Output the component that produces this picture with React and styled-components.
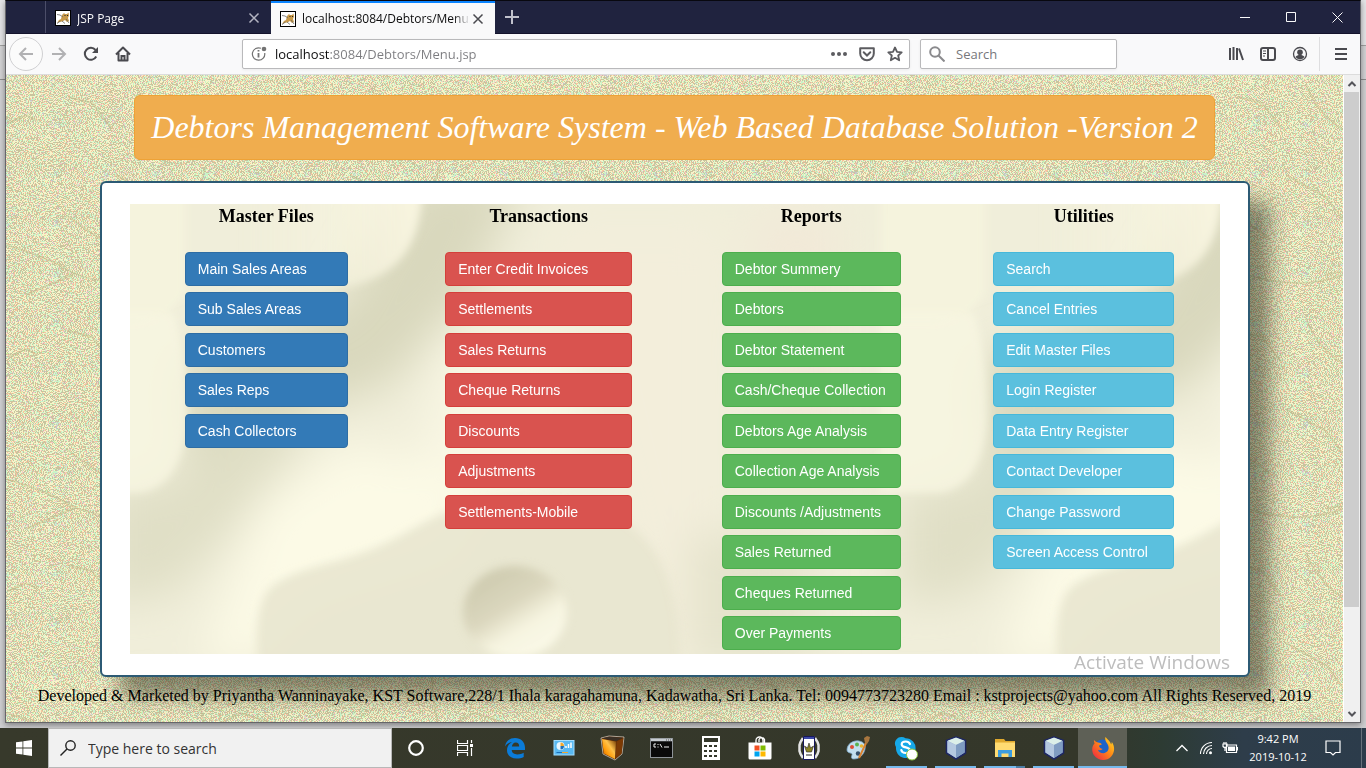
import React from "react";
import styled, { createGlobalStyle } from "styled-components";

const UI_FONT = '"Open Sans", "Noto Sans", sans-serif';

const GlobalStyle = createGlobalStyle`
  *, *::before, *::after { box-sizing: border-box; }
  body { margin: 0; background: #c4c4c4; font-family: ${UI_FONT}; }
  button { font: inherit; color: inherit; background: none; border: 0; padding: 0; }
  h1, h2, p, ul { margin: 0; padding: 0; }
  ul { list-style: none; }
`;

/* ---------- desktop ---------- */

const Desktop = styled.div`
  display: flex;
  flex-direction: column;
  min-height: 100vh;
  background: linear-gradient(#e4e4e6 0 45px, #a0a0a0 45px 46px, #d2d2d4 46px 79px, #8c8c8c 79px 80px, #cfcfd1 80px);
`;

const BrowserWindow = styled.div`
  flex: 1;
  display: flex;
  flex-direction: column;
  margin: 0 5px 5px;
  border: 1px solid #66666a;
  border-top-color: #08080f;
  box-shadow: 0 2px 6px rgba(0, 0, 0, 0.4);
  background: #f9f9fa;
`;

/* ---------- tab strip ---------- */

const TabStrip = styled.header`
  display: flex;
  align-items: stretch;
  height: 33px;
  padding-left: 39px;
  background: #20233f;
  border-bottom: 1px solid #14132c;
  color: #f9f9fa;
`;

const Tab = styled.div`
  display: flex;
  align-items: center;
  width: ${(p) => (p.$active ? 224 : 226)}px;
  height: ${(p) => (p.$active ? 33 : 32)}px;
  padding: ${(p) => (p.$active ? 0 : 2)}px 9px 0 9px;
  border-top: ${(p) => (p.$active ? "2px solid #0a84ff" : "0")};
  border-left: ${(p) => (p.$active ? "0" : "1px solid #4c4e69")};
  background: ${(p) => (p.$active ? "#f9f9fa" : "transparent")};
  color: ${(p) => (p.$active ? "#0c0c0d" : "#f9f9fa")};
  font-size: 12px;
  svg { flex: none; }
`;

const TabTitle = styled.span`
  flex: 1;
  overflow: hidden;
  margin: 0 0 0 6px;
  white-space: nowrap;
  mask-image: linear-gradient(90deg, #000 calc(100% - 16px), transparent);
`;

const TabClose = styled.button`
  display: flex;
  padding: 2px;
  color: ${(p) => (p.$active ? "#4a4a4f" : "#b4b5c2")};
`;

const NewTab = styled.button`
  display: flex;
  align-items: center;
  padding: 0 10px;
  color: #c0c1cc;
`;

const WindowButtons = styled.div`
  display: flex;
  margin-left: auto;
  button { display: flex; align-items: center; justify-content: center; width: 46px; }
`;

/* ---------- toolbar ---------- */

const Toolbar = styled.div`
  display: flex;
  align-items: center;
  height: 41px;
  padding: 0 3px;
  border-bottom: 1px solid #dcdcdc;
  color: #4a4a4f;
`;

const ToolButton = styled.button`
  display: flex;
  align-items: center;
  justify-content: center;
  width: 32px;
  height: 32px;
`;

const BackButton = styled(ToolButton)`
  width: 34px;
  height: 34px;
  border: 1px solid #d0d0d2;
  border-radius: 50%;
  background: #fbfbfb;
`;

const Field = styled.form`
  display: flex;
  align-items: center;
  height: 30px;
  border: 1px solid #b9b9bb;
  border-radius: 2px;
  background: #fff;
  box-shadow: 0 1px 3px rgba(0, 0, 0, 0.06);
  input {
    flex: 1;
    min-width: 0;
    padding: 0;
    border: 0;
    outline: 0;
    background: transparent;
    font: 13px ${UI_FONT};
  }
`;

const AddressField = styled(Field)`
  flex: 1;
  margin-left: 103px;
  padding: 0 6px 0 8px;
  gap: 8px;
  input {
    color: transparent;
    background: linear-gradient(90deg, #0c0c0d 54px, #7c7c80 54px);
    background-clip: text;
    -webkit-background-clip: text;
  }
`;

const FieldActions = styled.div`
  display: flex;
  gap: 12px;
  color: #5c5c60;
  button { display: flex; }
`;

const SearchField = styled(Field)`
  width: 197px;
  margin: 0 103px 0 10px;
  padding: 0 8px;
  gap: 11px;
  input::placeholder { color: #77777b; opacity: 1; }
`;

const MenuDivider = styled.span`
  width: 1px;
  height: 34px;
  margin: 0 5px 0 3px;
  background: #dedee0;
`;

/* ---------- web page ---------- */

const Viewport = styled.div`
  flex: 1;
  display: flex;
`;

const Page = styled.main`
  position: relative;
  isolation: isolate;
  overflow: hidden;
  flex: 1;
  display: flex;
  flex-direction: column;
  align-items: center;
  padding-top: 20px;
  background: #ddd6b4;
  font-family: "Liberation Serif", "Times New Roman", serif;
`;

const Backdrop = styled.svg`
  position: absolute;
  inset: 0;
  z-index: -1;
  width: 100%;
  height: 100%;
`;

const Banner = styled.h1`
  padding: 12px 16px;
  border: 1px solid #eea236;
  border-radius: 6px;
  background: #f0ad4e;
  color: #fff;
  font-size: 32px;
  font-style: italic;
  font-weight: 400;
  line-height: 39px;
  white-space: nowrap;
`;

const Card = styled.section`
  align-self: stretch;
  margin: 21px 93px 0 94px;
  padding: 21px 28px;
  border: 2px solid #2c5a74;
  border-radius: 6px;
  background: #fff;
  box-shadow: 20px 20px 20px rgba(40, 40, 24, 0.5);
`;

const Panel = styled.div`
  position: relative;
  isolation: isolate;
  overflow: hidden;
  display: grid;
  grid-template-columns: repeat(4, 1fr);
  padding-bottom: 4px;
  background: #f0eeda;
`;

const MenuColumn = styled.section`
  display: flex;
  flex-direction: column;
  align-items: center;
`;

const MenuHeading = styled.h2`
  height: 48px;
  padding-top: 2px;
  font-size: 18px;
  line-height: 20px;
  color: #000;
`;

const MenuList = styled.ul`
  display: grid;
  grid-template-rows: repeat(10, 34px);
  align-content: space-between;
  width: ${(p) => p.$width}px;
  height: 398px;
`;

const MenuButton = styled.button`
  width: 100%;
  height: 34px;
  padding: 0 12px;
  border: 1px solid ${(p) => p.$edge};
  border-radius: 4px;
  background: ${(p) => p.$fill};
  color: #fff;
  font: 14px/20px "Liberation Sans", Arial, sans-serif;
  text-align: left;
  white-space: nowrap;
`;

const PageFooter = styled.footer`
  padding: 10px 0;
  font-size: 16px;
  line-height: 18px;
  color: #000;
  white-space: nowrap;
`;

const Watermark = styled.div`
  position: absolute;
  right: 113px;
  bottom: 47px;
  color: #bdbdbd;
  font: 19px/26px ${UI_FONT};
  white-space: nowrap;
  pointer-events: none;
`;

const ScrollBar = styled.div`
  display: flex;
  flex-direction: column;
  width: 17px;
  border-left: 1px solid #fff;
  background: #f0f0f0;
  color: #55555a;
  button { display: flex; align-items: center; justify-content: center; height: 17px; }
`;

const ScrollTrack = styled.div`
  flex: 1;
  &::before { content: ""; display: block; height: 84%; margin-right: 1px; background: #cdcdcd; }
`;

/* ---------- taskbar ---------- */

const Taskbar = styled.footer`
  display: flex;
  height: 40px;
  background: linear-gradient(90deg, #37392b 0, #34372a 80%, #2d3b33 85%, #2e3d4a 91%, #2c3c4b 100%);
  color: #fff;
`;

const StartButton = styled.button`
  display: flex;
  align-items: center;
  justify-content: center;
  width: 48px;
`;

const TaskSearch = styled.form`
  display: flex;
  align-items: center;
  gap: 12px;
  width: 344px;
  padding-left: 11px;
  border: 1px solid #b8b8b8;
  background: #f1f1f1;
  color: #222;
  input {
    flex: 1;
    min-width: 0;
    padding: 0;
    border: 0;
    outline: 0;
    background: transparent;
    font: 14px ${UI_FONT};
  }
  input::placeholder { color: #333; opacity: 1; }
`;

const TaskButton = styled.button`
  position: relative;
  display: flex;
  align-items: center;
  justify-content: center;
  width: 49px;
  background: ${(p) => (p.$focused ? "#5e6056" : "transparent")};
  &::after {
    content: "";
    position: absolute;
    bottom: 0;
    left: ${(p) => (p.$focused ? 0 : 4)}px;
    right: ${(p) => (p.$focused ? 0 : 4)}px;
    height: ${(p) => (p.$running ? 2 : 0)}px;
    background: ${(p) => (p.$stacked ? "linear-gradient(90deg, #76b9ed 78%, #4d7ea5 78%)" : "#76b9ed")};
  }
`;

const Tray = styled.div`
  display: flex;
  align-items: center;
  margin-left: auto;
  padding-right: 16px;
  border-right: 1px solid #66717b;
  margin-right: 4px;
  button { display: flex; align-items: center; justify-content: center; width: 24px; height: 40px; }
`;

const Clock = styled.time`
  width: 68px;
  margin: 0 9px 0 2px;
  font-size: 11px;
  line-height: 18px;
  text-align: center;
  white-space: nowrap;
`;

/* ---------- drawings ---------- */

const Glyph = ({ size = 16, sw = 2, children, ...rest }) => (
  <svg width={size} height={size} viewBox={`0 0 ${size} ${size}`} fill="none" stroke="currentColor" strokeWidth={sw} aria-hidden="true" {...rest}>
    {children}
  </svg>
);

const CatFavicon = () => (
  <svg width="16" height="16" viewBox="0 0 16 16" aria-hidden="true">
    <rect x=".5" y=".5" width="15" height="15" fill="#fff" stroke="#000" />
    <path d="M7 5l2-2 1 1h2l1.500-1.500.5 3-1 2.500 1 3-2 1-2-2-3 1.500L4 12l-2 1 2-3 2-1z" fill="#c99a4a" />
    <path d="M2 4.500l3 .5 3 2M2 13.500l3.500-2.500M7 11l3 2.500M11 9l3 4" stroke="#666" strokeWidth=".8" fill="none" />
    <path d="M9.500 5.500h1M12 5.500h1" stroke="#222" />
  </svg>
);

const CloseIcon = () => (
  <Glyph size={12} sw={1.5}><path d="M1.500 1.500l9 9M10.500 1.500l-9 9" /></Glyph>
);

const CubeIcon = () => (
  <svg width="24" height="26" viewBox="0 0 24 26" aria-hidden="true">
    <path d="M12 2L21.500 5.500V18L12 24 2.500 18V5.500z" fill="#9db5d2" stroke="#1d2763" strokeWidth="1.600" strokeLinejoin="round" />
    <path d="M12 2.500l8.500 3.300L12 10 3.500 5.800z" fill="#dcefe9" />
    <path d="M3.500 6l8.500 4v13l-8.500-5.400z" fill="#b4c8e0" />
    <path d="M20.500 6L12 10v13l8.500-5.400z" fill="#7f9cc2" />
  </svg>
);

const icons = {
  cortana: <Glyph size={18} sw={2.2}><circle cx="8" cy="9" r="6.800" /></Glyph>,
  taskView: (
    <Glyph size={18} sw={1.2}>
      <path d="M.5 1v3.500h10V1M.5 17v-3.500h10V17M.5 6.500h10v5H.5zM14.500 1v3M14.500 9v8" />
      <path d="M13 5h3v3h-3z" fill="currentColor" stroke="none" />
    </Glyph>
  ),
  edge: (
    <svg width="22" height="22" viewBox="0 0 22 22">
      <path d="M1 9.500C2 3.500 6.300 1 11 1c6 0 10 4 10 9.800v2.300H7.700c.2 3 2.700 4.300 5.600 4.300 2.500 0 4.600-.6 6.400-1.700v4.200c-2 1-4.500 1.600-7.200 1.600C6.500 21.500 3 18 3 13.200c0-3.700 2-6.700 5.300-8.200C5 5.400 2.600 7 1 9.500zM7.900 9.500h7.300c0-2.500-1.200-4-3.400-4-2.300 0-3.600 1.700-3.900 4z" fill="#0b7bd8" />
    </svg>
  ),
  control: (
    <svg width="22" height="18" viewBox="0 0 22 18">
      <rect x="1" y="1.500" width="20" height="14.500" fill="#59b9f2" stroke="#a3ddff" />
      <circle cx="7.500" cy="7" r="4" fill="#e8f6ff" />
      <path d="M7.500 7V3.500A3.500 3.500 0 0 1 11 7z" fill="#f2a72e" />
      <path d="M7.500 7h3.500a3.500 3.500 0 0 1-3.500 3.500z" fill="#1c6fb8" />
      <path d="M13 9V7M15.500 9V5M18 9V3.500" stroke="#fff" strokeWidth="1.500" />
      <path d="M3.500 13.500H13" stroke="#1c6fb8" /><path d="M9 13.500h6" stroke="#f2a72e" />
    </svg>
  ),
  orangeBox: (
    <svg width="25" height="26" viewBox="0 0 25 26">
      <defs><linearGradient id="boxFront" x1="0" y1="1" x2="1" y2="0"><stop offset="0" stopColor="#b94a00" /><stop offset=".35" stopColor="#ff9d0a" /><stop offset=".6" stopColor="#ffc24a" /><stop offset="1" stopColor="#6a3200" /></linearGradient></defs>
      <path d="M1 3l8-2 15 1-2 17-7 6L3 19z" fill="#5a2c08" stroke="#c9c3b8" strokeWidth=".8" />
      <path d="M2 4l14 2.500-1 17.500L3.800 18.500z" fill="url(#boxFront)" />
      <path d="M16.500 6.500L23.300 3 21.500 18.500 15.500 23.500z" fill="#7c3a04" />
      <path d="M2 3.300L9.500 1.800l13.500.9-7 3.200z" fill="#3a3026" />
    </svg>
  ),
  terminal: (
    <svg width="23" height="20" viewBox="0 0 23 20">
      <rect x=".5" y=".5" width="22" height="19" fill="#0a0a0a" stroke="#8e9398" />
      <path d="M1 2h21" stroke="#c7ccd1" strokeWidth="2.500" /><path d="M16 2h5" stroke="#555" strokeDasharray="1 1" />
      <path d="M6 6H4v3h2M8 6v1M8 8.500v1M10 6l2 3.500M14 9h5" stroke="#eee" fill="none" />
    </svg>
  ),
  calculator: (
    <svg width="18" height="24" viewBox="0 0 18 24">
      <path d="M0 0h18v24H0z" fill="#fff" /><path d="M2 2h14v4H2z" fill="#34372a" />
      <g fill="#34372a">{[9, 14, 19].map((y) => [3, 8, 13].map((x) => <rect key={`${x}-${y}`} x={x - 1} y={y} width="3" height="2" />))}</g>
    </svg>
  ),
  store: (
    <svg width="24" height="24" viewBox="0 0 24 24">
      <path d="M8 7V4.500a3 3 0 0 1 7 0V7M11 6V3.500a3 3 0 0 1 5.500 0V7" fill="none" stroke="#fff" strokeWidth="1.300" />
      <path d="M.5 6.500h23V22a1.500 1.500 0 0 1-1.500 1.500H2A1.500 1.500 0 0 1 .5 22z" fill="#fff" />
      <path d="M6.500 9.500h5v5h-5z" fill="#f25022" /><path d="M12.500 9.500h5v5h-5z" fill="#7fba00" />
      <path d="M6.500 15.500h5v5h-5z" fill="#00a4ef" /><path d="M12.500 15.500h5v5h-5z" fill="#ffb900" />
    </svg>
  ),
  emblem: (
    <svg width="22" height="26" viewBox="0 0 22 26">
      <path d="M5 3L2.500 7 1.500 10v6l1 3L5 23M17 3l2.500 4 1 3v6l-1 3L17 23" fill="none" stroke="#e4e4e4" strokeWidth="2.500" />
      <path d="M5.500 1.500h11v23h-11z" fill="#fff" stroke="#17175c" /><path d="M6 3h10" stroke="#3c48a8" strokeWidth="2" />
      <path d="M11 8l1.500 5 3-2-2 6h-5l-2-6 3 2z" fill="#8d8426" stroke="#222" strokeWidth=".6" /><path d="M8 20h6" stroke="#222" />
    </svg>
  ),
  paint: (
    <svg width="26" height="26" viewBox="0 0 26 26">
      <path d="M2 15C2 9 8 5 14 6c5 1 7 4 6 8-1 5-5 10-11 10-3 0-3-2-2-4 1-3-5-1-5-5z" fill="#c2dff0" stroke="#7ba6c6" strokeWidth=".8" />
      <circle cx="12" cy="9.500" r="2" fill="#59b253" /><circle cx="7" cy="12" r="2" fill="#dd4d36" />
      <circle cx="16.500" cy="11" r="1.800" fill="#eab52f" /><circle cx="13" cy="18.500" r="2.200" fill="#35506b" />
      <path d="M21 8l-7 15" stroke="#d98331" strokeWidth="2" /><path d="M20 8l-1-5 3-2 3 1-1 4-2 3z" fill="#a9763f" />
    </svg>
  ),
  skype: (
    <svg width="25" height="25" viewBox="0 0 25 25">
      <path d="M7.500 1a6.500 6.500 0 0 1 4 1.200A10 10 0 0 1 21.500 13.500 6.500 6.500 0 0 1 13 22 10 10 0 0 1 2 11 6.500 6.500 0 0 1 7.500 1z" fill="#16a8e8" />
      <path d="M16 8c-.8-1.800-2.300-2.500-4.300-2.500-2.400 0-4 1-4 2.900 0 4 8 2 8 5.600 0 2-1.700 3-4 3S7.800 16 7.300 14" fill="none" stroke="#fff" strokeWidth="2.200" strokeLinecap="round" />
      <circle cx="18" cy="18.500" r="5.500" fill="#fff" stroke="#8bc53f" strokeWidth="1" />
    </svg>
  ),
  cube: <CubeIcon />,
  explorer: (
    <svg width="22" height="20" viewBox="0 0 22 20">
      <path d="M1 1h9l1.500 2H21v16H1z" fill="#e0a92e" /><path d="M1 4.500h20V19H1z" fill="#ffdb72" />
      <path d="M4 19v-7h14v7h-3.500v-3.500h-7V19z" fill="#3c9de0" />
    </svg>
  ),
  firefox: (
    <svg width="24" height="25" viewBox="0 0 24 25">
      <defs><linearGradient id="flame" x1="1" y1="0" x2="0" y2="1"><stop offset="0" stopColor="#ffe226" /><stop offset=".45" stopColor="#ff8a16" /><stop offset="1" stopColor="#ec1b4b" /></linearGradient></defs>
      <circle cx="11.500" cy="12" r="8.500" fill="#1e63c8" />
      <path d="M3 4c-.2 1.200 0 2.300.6 3.300C.4 10.800.6 15.700 3 19.200c4 5.800 12.500 6.200 17 1.500 4-4.200 4-10.500.8-14.700-.2 1-.2 1.600-.6 2.400C19 5 17 4 14.500 1c-1 2.500.5 4.500 2 7 2.700 4.700.2 9-4 9.200-2.800.1-5-1.300-5.500-3.400 1.500.8 3.200.4 4.700-.8-2.300-.2-3.700-1.800-3.700-3.200.8-.8 2-.8 2.800-1.300-.7-1.300-2-1.800-3.600-1.900C6 6 4.200 5.600 3 4z" fill="url(#flame)" />
    </svg>
  ),
};

const PaperBackdrop = () => (
  <Backdrop aria-hidden="true">
    <defs>
      <filter id="grain" x="0" y="0" width="100%" height="100%" colorInterpolationFilters="sRGB">
        <feTurbulence type="fractalNoise" baseFrequency="0.98" numOctaves="2" seed="4" />
        <feColorMatrix values=".6 .4 0 0 -.01  0 .7 .3 0 0  .1 .6 .3 0 .01  0 0 0 0 1" />
        <feComponentTransfer>
          <feFuncR type="discrete" tableValues="0.79 0.97" />
          <feFuncG type="discrete" tableValues="0.77 0.96" />
          <feFuncB type="discrete" tableValues="0.62 0.79" />
        </feComponentTransfer>
      </filter>
      <pattern id="veins" width="234" height="234" patternUnits="userSpaceOnUse">
        <g fill="none" stroke="#bbb582" strokeWidth="2">
          <path d="M0 170q40 12 60 24t60 14 114-38" />
          <path d="M2 48l18-8 12 6M62 22l24 6 20 26" />
          <path d="M60 140l34 24M130 10q20 50 80 60M200 90q-20 60 10 120" />
          <path d="M110 100l40 22 30 40M20 220l50-22M150 200q30-10 60 14" />
        </g>
      </pattern>
    </defs>
    <rect width="100%" height="100%" filter="url(#grain)" />
    <rect width="100%" height="100%" fill="url(#veins)" opacity=".4" />
  </Backdrop>
);

const StoneBackdrop = () => (
  <Backdrop viewBox="0 0 1090 450" preserveAspectRatio="none" aria-hidden="true">
    <defs>
      <filter id="soft" x="-20%" y="-20%" width="140%" height="140%"><feGaussianBlur stdDeviation="22" /></filter>
      <filter id="edge" x="-20%" y="-20%" width="140%" height="140%"><feGaussianBlur stdDeviation="4" /></filter>
      <linearGradient id="bay" x1="0" x2="1"><stop offset="0" stopColor="#f8f6e1" stopOpacity="0" /><stop offset="1" stopColor="#f8f5e0" /></linearGradient>
      <linearGradient id="pit" x1=".1" y1="0" x2=".8" y2="1"><stop offset="0" stopColor="#c9c6aa" /><stop offset=".45" stopColor="#dbd7be" /><stop offset=".68" stopColor="#f6f4e0" /><stop offset="1" stopColor="#fbfae9" /></linearGradient>
      <g id="stone">
        <g filter="url(#soft)">
          <path d="M285-30h110L340 90 260 180 170 210 60 320 50 160 210 100z" fill="#d9d8bd" />
          <path d="M-30 290l90-20 60-60 60 20-80 100-60 60-70 10z" fill="#e0dfc6" />
          <path d="M70 460l60-160 90-60 130 30-20 80-150 50-60 60z" fill="#fcfae6" />
          <path d="M320 130h120l20 120-90 60-80-60z" fill="#f9f7e4" />
          <path d="M420 20h170v440h-70z" fill="#f3eedb" />
          <path d="M560 330h120v130H560z" fill="#e5e3cc" />
          <path d="M620 10h90v260h-60z" fill="#f2e9d8" />
        </g>
        <g filter="url(#edge)">
          <path d="M110-20h182c0 55-17 92-77 103-40 5-70-13-105-22z" fill="url(#bay)" />
          <path d="M-50-20H56v110q-20 30-55 30h-51z" fill="#f8f6e0" opacity=".6" />
          <path d="M-50 110h95q14 50 12 110-5 60-45 69h-62z" fill="#f8f6e1" opacity=".8" />
          <path d="M128 480c0-44-6-83 17-100 35-22 70-18 125-48 50-28 80-48 180-30 80 14 104 80 100 178z" fill="#e7e5cf" opacity=".85" />
        </g>
      </g>
    </defs>
    <use href="#stone" />
    <use href="#stone" x="800" />
    <ellipse cx="385" cy="408" rx="52" ry="46" fill="url(#pit)" filter="url(#edge)" />
  </Backdrop>
);

/* ---------- data ---------- */

const menus = [
  { title: "Master Files", fill: "#337ab7", edge: "#2e6da4", width: 163,
    items: ["Main Sales Areas", "Sub Sales Areas", "Customers", "Sales Reps", "Cash Collectors"] },
  { title: "Transactions", fill: "#d9534f", edge: "#d43f3a", width: 187,
    items: ["Enter Credit Invoices", "Settlements", "Sales Returns", "Cheque Returns", "Discounts", "Adjustments", "Settlements-Mobile"] },
  { title: "Reports", fill: "#5cb85c", edge: "#4cae4c", width: 179,
    items: ["Debtor Summery", "Debtors", "Debtor Statement", "Cash/Cheque Collection", "Debtors Age Analysis", "Collection Age Analysis", "Discounts /Adjustments", "Sales Returned", "Cheques Returned", "Over Payments"] },
  { title: "Utilities", fill: "#5bc0de", edge: "#46b8da", width: 181,
    items: ["Search", "Cancel Entries", "Edit Master Files", "Login Register", "Data Entry Register", "Contact Developer", "Change Password", "Screen Access Control"] },
];

const tasks = [
  { label: "Cortana", icon: "cortana" },
  { label: "Task View", icon: "taskView" },
  { label: "Edge", icon: "edge" },
  { label: "Control Panel", icon: "control" },
  { label: "Package", icon: "orangeBox" },
  { label: "Command Prompt", icon: "terminal" },
  { label: "Calculator", icon: "calculator" },
  { label: "Store", icon: "store" },
  { label: "Emblem", icon: "emblem" },
  { label: "Paint", icon: "paint" },
  { label: "Skype", icon: "skype", running: true },
  { label: "NetBeans", icon: "cube", running: true },
  { label: "File Explorer", icon: "explorer", running: true, stacked: true },
  { label: "NetBeans project", icon: "cube", running: true },
  { label: "Firefox", icon: "firefox", running: true, focused: true },
];

/* ---------- sections ---------- */

const BrowserTabs = () => (
  <TabStrip>
    <Tab>
      <CatFavicon />
      <TabTitle>JSP Page</TabTitle>
      <TabClose aria-label="Close tab"><CloseIcon /></TabClose>
    </Tab>
    <Tab $active>
      <CatFavicon />
      <TabTitle>localhost:8084/Debtors/Menu.jsp</TabTitle>
      <TabClose $active aria-label="Close tab"><CloseIcon /></TabClose>
    </Tab>
    <NewTab aria-label="New tab"><Glyph size={14}><path d="M7 0v14M0 7h14" /></Glyph></NewTab>
    <WindowButtons>
      <button aria-label="Minimize"><Glyph size={11} sw={1}><path d="M0 5.500h10" /></Glyph></button>
      <button aria-label="Maximize"><Glyph size={11} sw={1}><path d="M.5.500h9v9h-9z" /></Glyph></button>
      <button aria-label="Close"><Glyph size={11} sw={1}><path d="M.5.500l10 10M10.500.500l-10 10" /></Glyph></button>
    </WindowButtons>
  </TabStrip>
);

const BrowserToolbar = () => (
  <Toolbar>
    <BackButton aria-label="Back"><Glyph color="#b1b1b3"><path d="M15 8H2M8 2L2 8l6 6" /></Glyph></BackButton>
    <ToolButton aria-label="Forward"><Glyph color="#b1b1b3"><path d="M1 8h13M8 2l6 6-6 6" /></Glyph></ToolButton>
    <ToolButton aria-label="Reload">
      <Glyph><path d="M13.200 10.500A6 6 0 1 1 12.500 4" /><path d="M15 1v6H9z" fill="currentColor" stroke="none" /></Glyph>
    </ToolButton>
    <ToolButton aria-label="Home">
      <Glyph><path d="M1 8.500L8 1.500l7 7M3.500 7v7.500h9V7" strokeLinejoin="round" /><path d="M6.500 14v-4h3v4" /></Glyph>
    </ToolButton>
    <AddressField>
      <Glyph color="#737373" sw={1.2}>
        <path d="M10 2.300A6.200 6.200 0 1 0 13.700 7" /><path d="M7.500 7v4.500M7.500 4v1.600" strokeWidth="1.800" />
        <circle cx="13" cy="3" r="2.300" fill="currentColor" stroke="none" />
      </Glyph>
      <input aria-label="Address" defaultValue="localhost:8084/Debtors/Menu.jsp" />
      <FieldActions>
        <button type="button" aria-label="Page actions">
          <Glyph><g fill="currentColor" stroke="none"><circle cx="2" cy="8" r="2" /><circle cx="8" cy="8" r="2" /><circle cx="14" cy="8" r="2" /></g></Glyph>
        </button>
        <button type="button" aria-label="Save to Pocket">
          <Glyph><path d="M1.200 2.200h13.600V7.500a6.800 6.800 0 0 1-13.600 0z" strokeLinejoin="round" /><path d="M4.700 6.300L8 9.500l3.300-3.200" strokeLinecap="round" /></Glyph>
        </button>
        <button type="button" aria-label="Bookmark">
          <Glyph sw={1.8}><path d="M8 1.500l2 4.300 4.700.5-3.500 3.200 1 4.800L8 11.800l-4.200 2.500 1-4.800L1.300 6.300 6 5.800z" strokeLinejoin="round" /></Glyph>
        </button>
      </FieldActions>
    </AddressField>
    <SearchField>
      <Glyph color="#8a8a8d"><circle cx="6" cy="6" r="4.800" /><path d="M9.500 9.500l6 6" /></Glyph>
      <input aria-label="Search the web" placeholder="Search" />
    </SearchField>
    <ToolButton aria-label="Library">
      <Glyph><path d="M2 2v12M5.500 1v13M9 2v12M11 2.500l4 11.500" /></Glyph>
    </ToolButton>
    <ToolButton aria-label="Sidebars">
      <Glyph><rect x="1" y="2" width="14" height="12" rx="2" /><path d="M8 2v12" /><path d="M3 5h3M3 7.500h3M3 10h2" strokeWidth="1" /></Glyph>
    </ToolButton>
    <ToolButton aria-label="Account">
      <Glyph sw={1.3}><circle cx="8" cy="8" r="6.500" /><g fill="currentColor" stroke="none"><circle cx="8" cy="6.200" r="2.800" /><path d="M3.500 11c1-1.500 2.500-2 4.500-2s3.500.5 4.500 2A5.500 5.500 0 0 1 8 13.300 5.500 5.500 0 0 1 3.500 11z" /></g></Glyph>
    </ToolButton>
    <MenuDivider />
    <ToolButton aria-label="Menu"><Glyph><path d="M2 3h12M2 8h12M2 13h12" /></Glyph></ToolButton>
  </Toolbar>
);

const DebtorsPage = () => (
  <Page>
    <PaperBackdrop />
    <Banner>Debtors Management Software System - Web Based Database Solution -Version 2</Banner>
    <Card>
      <Panel>
        <StoneBackdrop />
        {menus.map((menu) => (
          <MenuColumn key={menu.title}>
            <MenuHeading>{menu.title}</MenuHeading>
            <MenuList $width={menu.width}>
              {menu.items.map((item) => (
                <li key={item}><MenuButton $fill={menu.fill} $edge={menu.edge}>{item}</MenuButton></li>
              ))}
            </MenuList>
          </MenuColumn>
        ))}
      </Panel>
    </Card>
    <PageFooter>
      Developed &amp; Marketed by Priyantha Wanninayake, KST Software,228/1 Ihala karagahamuna, Kadawatha, Sri Lanka. Tel: 0094773723280 Email : kstprojects@yahoo.com All Rights Reserved, 2019
    </PageFooter>
    <Watermark>Activate Windows</Watermark>
  </Page>
);

const WindowsTaskbar = () => (
  <Taskbar>
    <StartButton aria-label="Start">
      <svg width="16" height="16" viewBox="0 0 16 16" fill="#fff" aria-hidden="true"><path d="M0 2.300l6.500-.9v6.200H0zM7.300 1.300L16 0v7.600H7.300zM0 8.400h6.500v6.200L0 13.700zM7.300 8.400H16V16l-8.700-1.300z" /></svg>
    </StartButton>
    <TaskSearch>
      <Glyph sw={1.4}><circle cx="10.500" cy="5.500" r="4.700" /><path d="M7 9L.5 15.500" /></Glyph>
      <input aria-label="Search this computer" placeholder="Type here to search" />
    </TaskSearch>
    {tasks.map((t) => (
      <TaskButton key={t.label} aria-label={t.label} $running={t.running} $stacked={t.stacked} $focused={t.focused}>
        {icons[t.icon]}
      </TaskButton>
    ))}
    <Tray>
      <button aria-label="Show hidden icons"><Glyph size={12} sw={1.3}><path d="M.5 9L6 3.500 11.500 9" /></Glyph></button>
      <button aria-label="Network">
        <Glyph size={14} sw={1.1}><path d="M1.500 13A11.500 11.500 0 0 1 13 1.500M4.500 13A8.500 8.500 0 0 1 13 4.500M7.500 13A5.500 5.500 0 0 1 13 7.500" /><circle cx="11.500" cy="11.800" r="1.500" fill="currentColor" stroke="none" /></Glyph>
      </button>
      <button aria-label="Battery">
        <Glyph size={16} sw={1.2}><path d="M4.500 5h10v7.500h-10zM15.500 7v3.500M1 4h4v2.500q-2 2-4 0zM2 4V2M4 4V2M3 7v4" /><path d="M6 6.500h7V11H6z" fill="currentColor" stroke="none" /></Glyph>
      </button>
      <Clock>9:42 PM<br />2019-10-12</Clock>
      <button aria-label="Notifications"><Glyph size={16} sw={1.2}><path d="M1 1h14v11.500h-4.500L8 15l-2.500-2.500H1z" /></Glyph></button>
    </Tray>
  </Taskbar>
);

export default function App() {
  return (
    <>
      <GlobalStyle />
      <Desktop>
        <BrowserWindow>
          <BrowserTabs />
          <BrowserToolbar />
          <Viewport>
            <DebtorsPage />
            <ScrollBar>
              <button aria-label="Scroll up"><Glyph size={10}><path d="M1.500 7L5 3.500 8.500 7" /></Glyph></button>
              <ScrollTrack />
              <button aria-label="Scroll down"><Glyph size={10}><path d="M1.500 3L5 6.500 8.500 3" /></Glyph></button>
            </ScrollBar>
          </Viewport>
        </BrowserWindow>
        <WindowsTaskbar />
      </Desktop>
    </>
  );
}
